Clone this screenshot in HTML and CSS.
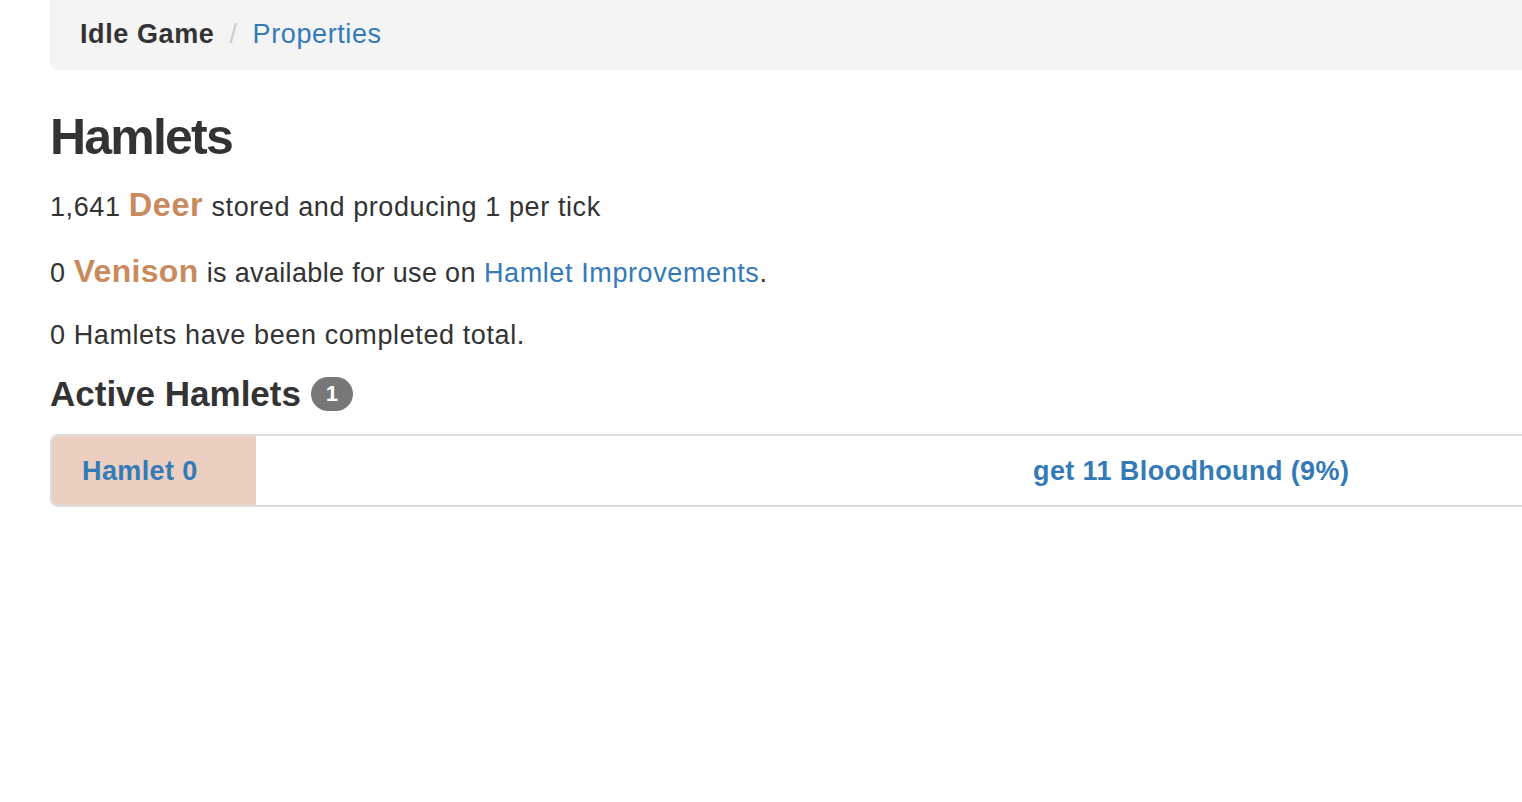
FILE: index.html
```html
<!DOCTYPE html>
<html>
<head>
<meta charset="utf-8">
<title>Idle Game - Hamlets</title>
<link rel="stylesheet" href="styles.css">
</head>
<body>
<div class="page">
  <ol class="breadcrumb">
    <li class="crumb-active">Idle Game</li>
    <li class="crumb-sep">/</li>
    <li><a href="#">Properties</a></li>
  </ol>
  <h1 class="title">Hamlets</h1>
  <p class="line"><span>1,641</span> <span class="res">Deer</span> stored and producing 1 per tick</p>
  <p class="line line-tight">0 <span class="res res-v">Venison</span> <span class="narrow">is available for use on</span> <a href="#">Hamlet Improvements</a>.</p>
  <p class="line">0 Hamlets have been completed total.</p>
  <h3 class="subtitle">Active Hamlets <span class="badge">1</span></h3>
  <div class="hamlet-row">
    <a class="hamlet-name" href="#">Hamlet 0</a>
    <a class="hamlet-goal" href="#">get 11 Bloodhound (9%)</a>
  </div>
</div>
</body>
</html>
```
FILE: styles.css
```css
html, body {
  margin: 0;
  padding: 0;
  background: #fff;
  overflow: hidden;
}
body {
  font-family: "Liberation Sans", Arial, Helvetica, sans-serif;
  color: #333;
  font-size: 27px;
  line-height: 37px;
  letter-spacing: 0.6px;
}
a {
  color: #337ab7;
  text-decoration: none;
}
.page {
  width: 1800px;
  padding-left: 50px;
}
.breadcrumb {
  list-style: none;
  margin: 0;
  height: 70px;
  box-sizing: border-box;
  padding: 16px 30px 0;
  background: #f4f4f4;
  border-radius: 0 0 8px 8px;
  display: flex;
  gap: 13px;
  font-size: 27px;
  line-height: 37px;
}
.crumb-active {
  font-weight: bold;
  color: #333;
}
.crumb-sep {
  color: #ccc;
  padding: 0 2px;
}
.title {
  font-size: 50px;
  line-height: 55px;
  font-weight: bold;
  letter-spacing: -1.8px;
  margin: 40px 0 22px;
}
.line {
  margin: 0 0 27px;
}
.line-tight {
  margin-bottom: 25px;
}
.res {
  color: #c98a5e;
  font-weight: bold;
  font-size: 32.5px;
}
.res-v {
  font-size: 32px;
  letter-spacing: 0.3px;
}
.narrow {
  letter-spacing: 0.35px;
}
.subtitle {
  font-size: 35px;
  line-height: 40px;
  font-weight: bold;
  letter-spacing: 0;
  margin: -7px 0 20px;
  display: flex;
  align-items: center;
  gap: 10px;
}
.badge {
  display: inline-block;
  background: #777;
  color: #fff;
  font-size: 22px;
  line-height: 34px;
  min-width: 42px;
  height: 34px;
  border-radius: 17px;
  text-align: center;
  font-weight: bold;
}
.hamlet-row {
  display: flex;
  height: 73px;
  box-sizing: border-box;
  border: 2px solid #ddd;
  border-radius: 8px;
  overflow: hidden;
  font-weight: bold;
  letter-spacing: 0.4px;
}
.hamlet-name {
  width: 204px;
  background: #ebd0c2;
  box-sizing: border-box;
  padding: 2px 0 0 30px;
  display: flex;
  align-items: center;
}
.hamlet-goal {
  padding: 2px 0 0 777px;
  display: flex;
  align-items: center;
}
```
